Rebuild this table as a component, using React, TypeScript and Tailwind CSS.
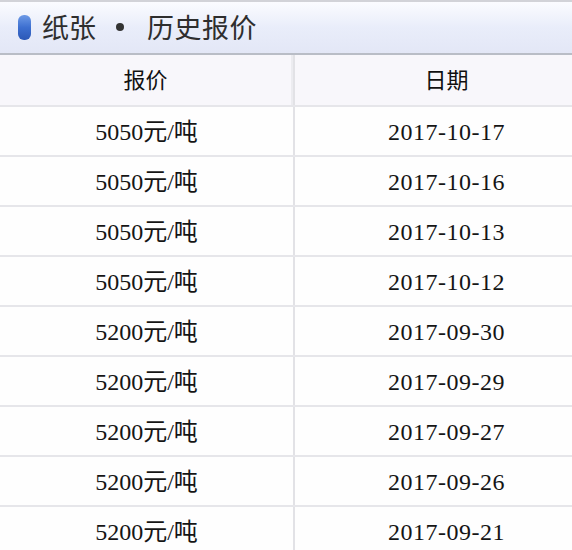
import React from 'react';

const rows = [
  { price: '5050元/吨', date: '2017-10-17' },
  { price: '5050元/吨', date: '2017-10-16' },
  { price: '5050元/吨', date: '2017-10-13' },
  { price: '5050元/吨', date: '2017-10-12' },
  { price: '5200元/吨', date: '2017-09-30' },
  { price: '5200元/吨', date: '2017-09-29' },
  { price: '5200元/吨', date: '2017-09-27' },
  { price: '5200元/吨', date: '2017-09-26' },
  { price: '5200元/吨', date: '2017-09-21' },
];

const cellFont = "font-['Liberation_Serif','Noto_Sans_CJK_SC',serif]";

export default function App() {
  return (
    <div className="h-[550px] w-[572px] overflow-hidden bg-white">
      <div className="h-[55px] border-t-2 border-b-2 border-t-[#d2d3d8] border-b-[#b9bdc6] bg-gradient-to-b from-[#fbfcff] via-[#e9edfa] to-[#e3e7f6]">
        <div className="flex h-full items-center pb-[1px] pl-[18px] font-['Noto_Sans_CJK_SC',sans-serif] text-[27px] text-[#2e2e2e]">
          <span className="mr-[11px] h-[25px] w-[13px] rounded-[6px] bg-gradient-to-b from-[#6e9ae6] via-[#3d6fd0] to-[#2c58b6]" />
          <span>纸张</span>
          <span className="ml-[20px] mr-[23px] h-[8px] w-[8px] rounded-full bg-[#333]" />
          <span className="tracking-[0.5px]">历史报价</span>
        </div>
      </div>
      <div className="w-[598px]">
        <div className={`flex h-[50px] bg-[#f8f7fb] text-[22px] text-[#111] ${cellFont}`}>
          <div className="flex w-[291px] items-center justify-center">报价</div>
          <div className="w-[2px] bg-[#ececf0]" />
          <div className="w-[2px] bg-[#e2e2e6]" />
          <div className="flex flex-1 items-center justify-center">日期</div>
        </div>
        {rows.map((r, i) => (
          <div key={i} className={`flex h-[50px] border-t-2 border-[#e6e6ea] bg-[#fefefe] text-[24px] text-[#151515] ${cellFont}`}>
            <div className="flex w-[293px] items-center justify-center pt-[1px]">{r.price}</div>
            <div className="w-[2px] bg-[#e2e2e6]" />
            <div className="flex flex-1 items-center justify-center pt-[1px] tracking-[0.5px]">{r.date}</div>
          </div>
        ))}
      </div>
    </div>
  );
}
